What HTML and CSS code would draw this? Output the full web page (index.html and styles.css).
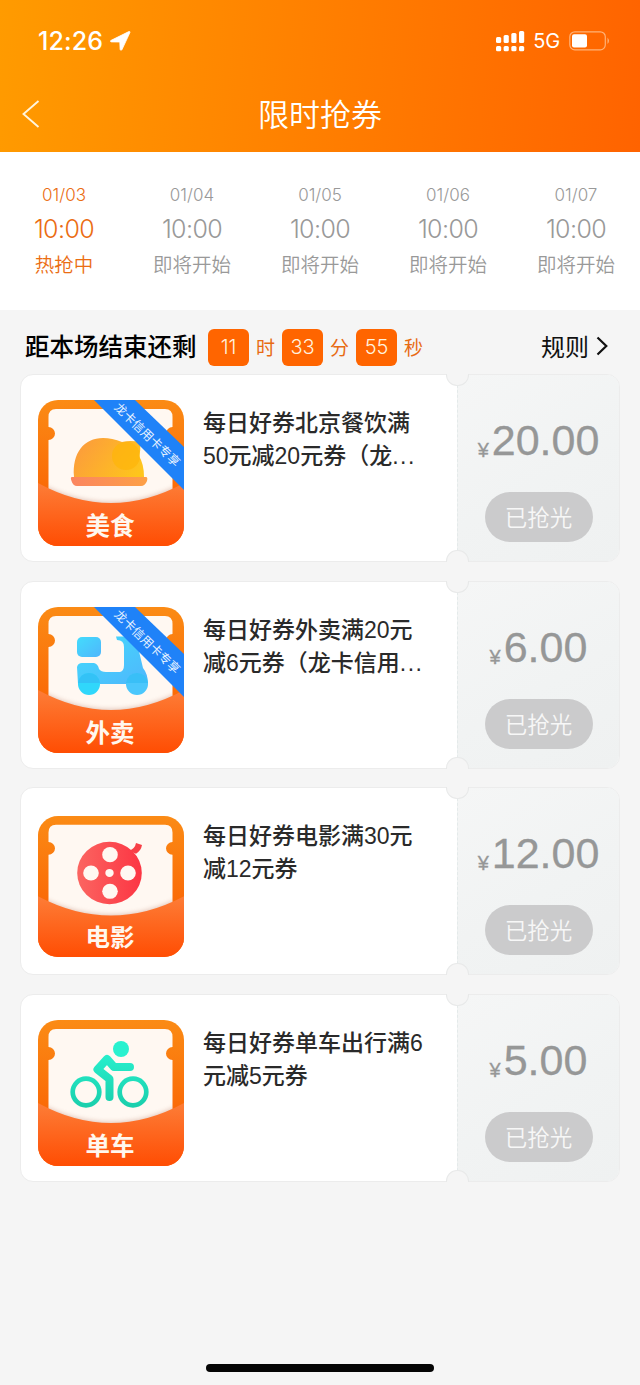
FILE: index.html
```html
<!DOCTYPE html>
<html lang="zh-CN">
<head>
<meta charset="utf-8">
<title>限时抢券</title>
<link rel="stylesheet" href="styles.css">
</head>
<body>
<svg class="defs" width="0" height="0" aria-hidden="true">
  <defs>
    <linearGradient id="frame" x1="0" y1="0" x2="0" y2="1"><stop offset="0" stop-color="#fb8b15"/><stop offset=".65" stop-color="#fa6806"/></linearGradient>
    <linearGradient id="pocket" x1="0" y1="0" x2="0" y2="1"><stop offset="0" stop-color="#fd7d37"/><stop offset="1" stop-color="#ff4d03"/></linearGradient>
    <linearGradient id="food" x1="0" y1=".3" x2="1" y2=".7"><stop offset="0" stop-color="#fc9c3c"/><stop offset="1" stop-color="#fec51c"/></linearGradient>
    <linearGradient id="plate" x1="0" y1="0" x2="1" y2="0"><stop offset="0" stop-color="#fb8560"/><stop offset="1" stop-color="#fda046"/></linearGradient>
    <linearGradient id="sky" x1="0" y1="0" x2="1" y2="1"><stop offset="0" stop-color="#43dcfc"/><stop offset="1" stop-color="#4fb6fc"/></linearGradient>
    <linearGradient id="reel" x1="0" y1="0" x2="1" y2="0"><stop offset="0" stop-color="#fb6561"/><stop offset="1" stop-color="#fc3543"/></linearGradient>
    <linearGradient id="mint" gradientUnits="userSpaceOnUse" x1="0" y1="20" x2="0" y2="88"><stop offset="0" stop-color="#2cf8d6"/><stop offset="1" stop-color="#19ceab"/></linearGradient>
    <filter id="soft" x="-20%" y="-20%" width="140%" height="140%"><feGaussianBlur stdDeviation="2.500"/></filter>
    <clipPath id="tile"><rect width="146" height="146" rx="20"/></clipPath>
    <clipPath id="paper"><path d="M18 9H127Q134.500 9 134.500 17V27A6.500 6.500 0 0 0 134.500 40V105H10.500V40A6.500 6.500 0 0 0 10.500 27V17Q10.500 9 18 9Z"/></clipPath>
    <symbol id="base" viewBox="0 0 146 146">
      <rect width="146" height="146" rx="20" fill="url(#frame)"/>
      <path d="M18 9H127Q134.500 9 134.500 17V27A6.500 6.500 0 0 0 134.500 40V105H10.500V40A6.500 6.500 0 0 0 10.500 27V17Q10.500 9 18 9Z" fill="#fff8f2"/>
    </symbol>
    <symbol id="front" viewBox="0 0 146 146">
      <g clip-path="url(#paper)"><path d="M0 83Q73 122 146 83V110H0Z" fill="#a9644b" opacity=".4" filter="url(#soft)"/></g>
      <g clip-path="url(#tile)"><path d="M0 83Q73 123 146 83V146H0Z" fill="url(#pocket)"/></g>
    </symbol>
    <symbol id="ribbon" viewBox="0 0 146 146">
      <path d="M56 0H97L146 47V90Z" fill="#1f82f8"/>
      <text x="109" y="39" transform="rotate(43.800 109 35)" text-anchor="middle" class="ribbon-text">龙卡信用卡专享</text>
    </symbol>
  </defs>
</svg>

<header class="header">
  <div class="status">
    <div class="clock">12:26
      <svg width="21" height="20" viewBox="0 0 21 20"><path d="M1.200 9.300 18.800.6c.9-.4 1.500.1 1.100 1L12 18.600c-.5 1-1.800.8-1.900-.3L9.800 11 1.500 10.900c-1.300-.1-1.500-1.100-.3-1.600Z" fill="#fff" stroke="#fff" stroke-width=".8"/></svg>
    </div>
    <div class="signals">
      <svg width="29" height="21" viewBox="0 0 29 21" fill="#fff"><rect y="6" width="5.200" height="6" rx="1.500"/><rect x="7.600" y="4" width="5.200" height="8" rx="1.500"/><rect x="15.300" y="2" width="5.200" height="10" rx="1.500"/><rect x="23" width="5.200" height="12" rx="1.500"/><rect y="15" width="5.200" height="5.200" rx="1.500"/><rect x="7.600" y="15" width="5.200" height="5.200" rx="1.500"/><rect x="15.300" y="15" width="5.200" height="5.200" rx="1.500"/><rect x="23" y="15" width="5.200" height="5.200" rx="1.500"/></svg>
      <span class="network">5G</span>
      <svg width="42" height="20" viewBox="0 0 42 20"><rect x=".8" y=".8" width="35.500" height="18" rx="5" fill="none" stroke="#ffb277" stroke-width="1.200"/><rect x="3" y="3.200" width="15" height="13.200" rx="2" fill="#fff"/><path d="M38.500 6.500Q41.500 9.800 38.500 13Z" fill="#ffb277"/></svg>
    </div>
  </div>
  <div class="nav">
    <svg class="back" width="20" height="30" viewBox="0 0 20 30"><path d="M16.500 2 1.500 15 16.500 28" fill="none" stroke="#fff5dd" stroke-width="1.900"/></svg>
    <h1 class="title">限时抢券</h1>
  </div>
</header>

<nav class="sessions">
  <div class="session active"><span class="date">01/03</span><span class="time">10:00</span><span class="state">热抢中</span></div>
  <div class="session"><span class="date">01/04</span><span class="time">10:00</span><span class="state">即将开始</span></div>
  <div class="session"><span class="date">01/05</span><span class="time">10:00</span><span class="state">即将开始</span></div>
  <div class="session"><span class="date">01/06</span><span class="time">10:00</span><span class="state">即将开始</span></div>
  <div class="session"><span class="date">01/07</span><span class="time">10:00</span><span class="state">即将开始</span></div>
</nav>

<section class="countdown">
  <span class="remain">距本场结束还剩</span>
  <span class="digits">11</span><span class="unit">时</span>
  <span class="digits">33</span><span class="unit">分</span>
  <span class="digits">55</span><span class="unit">秒</span>
  <span class="rules">规则<svg width="12" height="20" viewBox="0 0 12 20"><path d="M1.500 1.500 10.300 10 1.500 18.500" fill="none" stroke="#111" stroke-width="2.200"/></svg></span>
</section>

<main class="coupons">
  <article class="coupon">
    <svg class="icon" viewBox="0 0 146 146">
      <use href="#base"/>
      <path d="M36 77C34 53 46 38 65 38Q74 38 84 42Q92 40 102 42Q103 50 101 56Q106 64 106 77Z" fill="url(#food)"/>
      <circle cx="88" cy="56" r="14" fill="#fdb508" opacity=".7"/>
      <path d="M34 77H108Q110 77 109 81Q107 86 103 86H39Q35 86 33.500 81Q32 77 34 77Z" fill="url(#plate)"/>
      <use href="#front"/>
      <use href="#ribbon"/>
      <text x="72" y="135" text-anchor="middle" class="icon-label">美食</text>
    </svg>
    <h2 class="name">每日好券北京餐饮满<br>50元减20元券（龙<span class="dots">...</span></h2>
    <div class="stub"><p class="price"><small>¥</small>20.00</p><span class="sold">已抢光</span></div>
  </article>

  <article class="coupon">
    <svg class="icon" viewBox="0 0 146 146">
      <use href="#base"/>
      <rect x="39" y="30" width="24" height="20" rx="5" fill="url(#sky)"/>
      <path d="M78 29.500H93Q98 30 99 36L105 61Q110 67 110 77H40L39 60Q40 56 44 56H56Q60 57 61 62Q63 65 68 65H82Q86 64 86 58V40Q86 33 79 33Z" fill="url(#sky)"/>
      <circle cx="51" cy="77" r="11" fill="#30d7fb"/><circle cx="99" cy="77" r="11" fill="#4bc7fc"/>
      <path d="M40 76Q42 66 51 66T62 76ZM88 76Q90 66 99 66T110 76Z" fill="#35bdf5" opacity=".8"/>
      <use href="#front"/>
      <use href="#ribbon"/>
      <text x="72" y="135" text-anchor="middle" class="icon-label">外卖</text>
    </svg>
    <h2 class="name">每日好券外卖满20元<br>减6元券（龙卡信用<span class="dots">...</span></h2>
    <div class="stub"><p class="price"><small>¥</small>6.00</p><span class="sold">已抢光</span></div>
  </article>

  <article class="coupon">
    <svg class="icon icon-short" viewBox="0 0 146 146" preserveAspectRatio="none">
      <use href="#base"/>
      <path d="M91 36Q97 34 98 28L104 30Q103 36 98 39Z" fill="#f74047"/>
      <circle cx="71.500" cy="59" r="32.300" fill="url(#reel)"/>
      <g fill="#fff8f2"><circle cx="72" cy="40" r="7.800"/><circle cx="53" cy="59" r="7.800"/><circle cx="90" cy="59" r="7.800"/><circle cx="72" cy="78" r="7.800"/><circle cx="71.500" cy="59" r="4.200"/></g>
      <use href="#front"/>
      <text x="72" y="135" text-anchor="middle" class="icon-label">电影</text>
    </svg>
    <h2 class="name">每日好券电影满30元<br>减12元券</h2>
    <div class="stub"><p class="price"><small>¥</small>12.00</p><span class="sold">已抢光</span></div>
  </article>

  <article class="coupon">
    <svg class="icon" viewBox="0 0 146 146">
      <use href="#base"/>
      <g fill="none" stroke="url(#mint)"><circle cx="48" cy="72" r="13.300" stroke-width="4.700"/><circle cx="95" cy="72" r="13.300" stroke-width="4.700"/><path d="M92 47H76L69 39 59.500 49.500 71.500 59V77" stroke-width="8" stroke-linecap="round" stroke-linejoin="round"/></g>
      <circle cx="83" cy="29" r="8" fill="#29f1cf"/>
      <use href="#front"/>
      <text x="72" y="135" text-anchor="middle" class="icon-label">单车</text>
    </svg>
    <h2 class="name">每日好券单车出行满6<br>元减5元券</h2>
    <div class="stub"><p class="price"><small>¥</small>5.00</p><span class="sold">已抢光</span></div>
  </article>
</main>
<div class="home-bar"></div>
</body>
</html>
```

FILE: styles.css
```css
* { box-sizing: border-box; }
body {
  margin: 0;
  width: 640px;
  height: 1385px;
  display: flex;
  flex-direction: column;
  background: #f5f5f5;
  font-family: "Liberation Sans", "Noto Sans CJK SC", sans-serif;
}
h1, h2, p { margin: 0; }
.defs { position: absolute; }

.header {
  height: 152px;
  flex: none;
  color: #fff;
  background: linear-gradient(95deg, #ff9b00 0%, #ff6300 100%);
}
.status {
  height: 78px;
  padding: 4px 29px 0 38px;
  display: flex;
  align-items: center;
  justify-content: space-between;
}
.clock {
  display: flex;
  align-items: center;
  gap: 7px;
  font: 500 25px Inter, sans-serif;
  letter-spacing: .1px;
}
.signals { display: flex; align-items: center; }
.network { margin: 0 9px 0 8px; font: 400 20px Inter, sans-serif; letter-spacing: -.2px; }
.nav {
  height: 74px;
  padding: 0 22px 2px;
  display: grid;
  grid-template-columns: 20px 1fr 20px;
  align-items: center;
}
.title {
  text-align: center;
  font: 350 31px/44px "Noto Sans CJK SC", "Noto Sans CJK SC DemiLight", sans-serif;
  position: relative;
  top: -1px;
}

.sessions {
  height: 158px;
  flex: none;
  padding-top: 28px;
  display: grid;
  grid-template-columns: repeat(5, 128px);
  background: #fff;
  color: #999;
  font-family: Inter, "Noto Sans CJK SC", sans-serif;
}
.session { display: flex; flex-direction: column; align-items: center; }
.active { color: #eb6d13; }
.date { font-size: 17px; line-height: 30px; font-weight: 350; }
.time { font-size: 25px; line-height: 38px; font-weight: 350; letter-spacing: -.6px; }
.state { font-size: 19.500px; line-height: 34px; font-weight: 350; }

.countdown {
  height: 64px;
  flex: none;
  display: flex;
  align-items: center;
  padding: 10px 32px 0 25px;
  color: #111;
  font-family: "Noto Sans CJK SC", sans-serif;
}
.remain { width: 183px; font-size: 24.500px; line-height: 36px; font-weight: 500; padding-bottom: 3px; color: #000; }
.digits {
  width: 41px;
  height: 37px;
  border-radius: 6px;
  background: #ff6500;
  color: #fff2df;
  font: 350 20px/37px Inter, sans-serif;
  text-align: center;
}
.unit { width: 33px; text-align: center; font-size: 19px; color: #e86b13; padding-bottom: 2px; }
.rules {
  margin-left: auto;
  display: flex;
  align-items: center;
  gap: 7px;
  font-size: 24px;
  line-height: 36px;
  padding-bottom: 2px;
}

.coupons {
  display: grid;
  grid-auto-rows: 188px;
  row-gap: 18.500px;
  padding: 0 20px;
}
.coupon {
  position: relative;
  display: grid;
  grid-template-columns: 182px 1fr 162px;
  border: 1px solid #ececec;
  border-radius: 13px;
  background: #fff;
}
.coupon::before,
.coupon::after {
  content: "";
  position: absolute;
  left: 425px;
  width: 21px;
  height: 11px;
  background: #f5f5f5;
  border: 1px solid #e8e9e9;
}
.coupon::before { top: -1px; border-top: 0; border-radius: 0 0 11px 11px; }
.coupon::after { bottom: -1px; border-bottom: 0; border-radius: 11px 11px 0 0; }
.icon { width: 146px; height: 146px; margin: 25px 0 0 17px; }
.icon-short { height: 141px; margin-top: 28px; }
.icon-label { font: 700 24.500px "Noto Sans CJK SC", sans-serif; fill: #fff7ee; }
.ribbon-text { font: 400 12.200px "Noto Sans CJK SC", sans-serif; fill: #e9f4ff; }
.name {
  padding-top: 32px;
  font-size: 23px;
  line-height: 33px;
  font-weight: 500;
  color: #2a2a2a;
  white-space: nowrap;
}
.dots { letter-spacing: 1.500px; }
.stub {
  display: flex;
  flex-direction: column;
  align-items: center;
  border-left: 1px dashed #e4eaea;
  border-radius: 0 12px 12px 0;
  background: linear-gradient(150deg, #f5f6f6 0%, #f1f3f3 55%, #eff1f1 100%);
}
.price {
  margin-top: 40px;
  height: 50px;
  font-size: 43px;
  line-height: 50px;
  color: #969797;
  -webkit-text-stroke: .3px #969797;
}
.price small { position: relative; top: 2px; font-size: 20px; margin-right: 3px; }
.sold {
  width: 108px;
  height: 50px;
  margin-top: 27px;
  border-radius: 25px;
  background: #cbcbcc;
  color: #f7f7f7;
  font: 350 22.500px/49px "Noto Sans CJK SC", sans-serif;
  text-align: center;
}

.home-bar {
  width: 228px;
  height: 8px;
  margin: auto auto 13px;
  border-radius: 4px;
  background: #050505;
}
```
